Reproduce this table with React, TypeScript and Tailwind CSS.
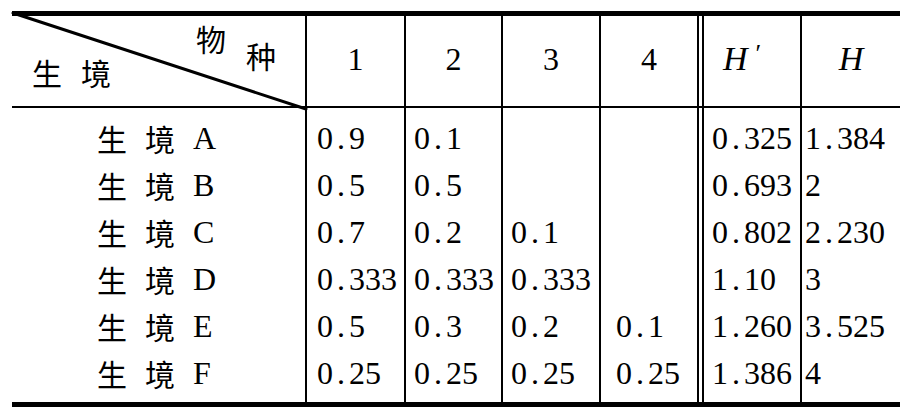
const serif = "font-['Liberation_Serif','Times_New_Roman',serif]";
const cjk = "font-['Noto_Sans_CJK_SC','Noto_Sans_CJK_JP',sans-serif]";
const cols = "grid-cols-[293px_99px_97px_98px_100px_3px_98px_100px]";

const rows = [
  ["A", "0.9", "0.1", "", "", "0.325", "1.384"],
  ["B", "0.5", "0.5", "", "", "0.693", "2"],
  ["C", "0.7", "0.2", "0.1", "", "0.802", "2.230"],
  ["D", "0.333", "0.333", "0.333", "", "1.10", "3"],
  ["E", "0.5", "0.3", "0.2", "0.1", "1.260", "3.525"],
  ["F", "0.25", "0.25", "0.25", "0.25", "1.386", "4"],
];

// each character sits in a 16px cell, the point too, like the typeset original
const Num = ({ v }: { v: string }) => (
  <span className={`flex text-[32px] leading-none ${serif}`}>
    {v.split("").map((c, i) => (
      <span key={i} className="inline-block w-[16px] text-center">
        {c}
      </span>
    ))}
  </span>
);

const Column = ({ idx, className }: { idx: number; className: string }) => (
  <div className={`flex flex-col py-[6px] ${className}`}>
    {rows.map((r) => (
      <div key={r[0]} className="flex h-[47px] items-center">
        {r[idx] && <Num v={r[idx]} />}
      </div>
    ))}
  </div>
);

export default function App() {
  return (
    <div className="min-h-[414px] w-[903px] bg-white pt-[11px] text-black">
      <div className="ml-[12px] w-[888px] border-t-[5px] border-b-[5px] border-black">
        {/* header */}
        <div className={`grid ${cols} h-[92px] border-b-2 border-black`}>
          <div className="relative flex flex-col">
            <svg
              className="absolute left-0 top-0 overflow-visible"
              width="293"
              height="92"
            >
              <line x1="1" y1="-3" x2="294" y2="93" stroke="black" strokeWidth="3" strokeLinecap="round" />
            </svg>
            <div className={`flex items-start gap-[20px] pl-[184px] pt-[7px] text-[30px] leading-none ${cjk}`}>
              <span>物</span>
              <span className="translate-y-[17px]">种</span>
            </div>
            <div className={`mt-auto mb-[19px] flex gap-[19px] pl-[20px] text-[30px] leading-none ${cjk}`}>
              <span>生</span>
              <span>境</span>
            </div>
          </div>
          {["1", "2", "3"].map((h) => (
            <div key={h} className={`flex items-center justify-center border-l-2 border-black pb-[5px] text-[32px] ${serif}`}>
              {h}
            </div>
          ))}
          <div className={`flex items-center justify-center border-x-2 border-black pb-[5px] text-[32px] ${serif}`}>4</div>
          <div />
          <div className={`flex items-center justify-center border-l-2 border-black pr-[20px] pb-[5px] text-[34px] italic ${serif}`}>
            H<span className="ml-[8px] -mt-[10px] text-[26px] not-italic">′</span>
          </div>
          <div className={`flex items-center justify-center border-l-2 border-black pb-[5px] text-[34px] italic ${serif}`}>H</div>
        </div>

        {/* body */}
        <div className={`grid ${cols}`}>
          <div className="flex flex-col py-[6px]">
            {rows.map((r) => (
              <div key={r[0]} className="flex h-[47px] items-center gap-[18px] pl-[85px]">
                <span className={`text-[30px] leading-none ${cjk}`}>生</span>
                <span className={`text-[30px] leading-none ${cjk}`}>境</span>
                <span className={`text-[32px] leading-none ${serif}`}>{r[0]}</span>
              </div>
            ))}
          </div>
          <Column idx={1} className="border-l-2 border-black pl-[10px]" />
          <Column idx={2} className="border-l-2 border-black pl-[8px]" />
          <Column idx={3} className="border-l-2 border-black pl-[8px]" />
          <Column idx={4} className="border-x-2 border-black pl-[15px]" />
          <div />
          <Column idx={5} className="border-l-2 border-black pl-[8px]" />
          <Column idx={6} className="border-l-2 border-black pl-[3px]" />
        </div>
      </div>
    </div>
  );
}
